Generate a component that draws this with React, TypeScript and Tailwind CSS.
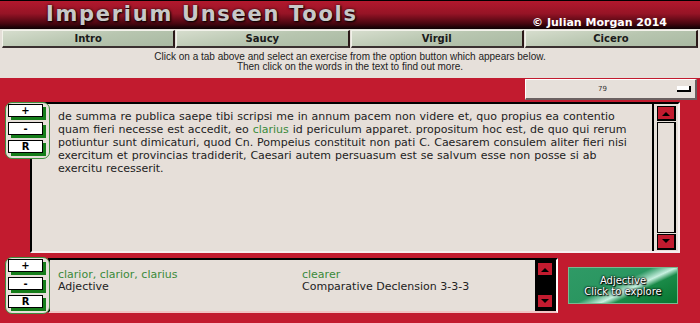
import React from "react";

function BtnGroup() {
  return (
    <div className="w-[45px] h-[57px] rounded-[7px] border-[1.5px] border-[#3e8e3e] bg-[#e6dfd9] flex flex-col pl-[2px] pt-[1px] gap-[5px]">
      {["+", "-", "R"].map((l) => (
        <div
          key={l}
          className="w-[35px] h-[13px] bg-white border border-black shadow-[3px_3px_0_#157d1a] text-[10px] font-bold leading-[11px] text-center text-black"
        >
          {l}
        </div>
      ))}
    </div>
  );
}

function Arrow({ up }: { up: boolean }) {
  return (
    <svg width="8" height="5" viewBox="0 0 8 5">
      {up ? <path d="M0 5 L4 1 L8 5 Z" fill="#000" /> : <path d="M0 0 L8 0 L4 4 Z" fill="#000" />}
    </svg>
  );
}

export default function App() {
  const tabs = ["Intro", "Saucy", "Virgil", "Cicero"];
  return (
    <div className="w-[700px] h-[323px] bg-[#c21b2f] flex flex-col overflow-hidden font-['DejaVu_Sans',Verdana,sans-serif]">
      <header className="h-[29px] shrink-0 flex border-t border-black bg-[linear-gradient(to_bottom,#b3182d_0%,#961426_45%,#4a0610_80%,#0c0002_100%)]">
        <h1 className="ml-[46px] mt-[1px] text-[21px] leading-[24px] font-bold tracking-[1.7px] text-[#c8c8c8] [text-shadow:1px_1px_2px_#000,0_0_3px_rgba(0,0,0,0.6)]">
          Imperium Unseen Tools
        </h1>
        <div className="ml-auto mr-[33px] mt-[15px] text-[11px] leading-[13px] font-bold text-white">
          © Julian Morgan 2014
        </div>
      </header>

      <nav className="h-[19px] shrink-0 bg-[#e4dfd8] flex gap-px px-[2px] pt-px">
        {tabs.map((t) => (
          <div
            key={t}
            className="flex-1 flex items-center justify-center text-[10px] font-bold text-[#1a1a1a] border-t border-l border-t-[#f2f2ea] border-l-[#f2f2ea] border-r-2 border-b-2 border-r-[#2a1818] border-b-[#3a3030] bg-[linear-gradient(170deg,#d6ddcd_0%,#b8c6b0_50%,#a9b9a2_100%)]"
          >
            {t}
          </div>
        ))}
      </nav>

      <div className="h-[30px] shrink-0 bg-[#e6e0da] pt-[4px] text-center text-[10px] leading-[10px] text-[#222] font-['Liberation_Sans',Arial,sans-serif]">
        Click on a tab above and select an exercise from the option button which appears below.
        <br />
        Then click on the words in the text to find out more.
      </div>

      <div className="h-[24px] shrink-0 flex justify-end pr-[3px] pt-px">
        <div className="w-[172px] h-[21px] bg-[#e6e0da] border-t border-l border-t-white border-l-white border-b-2 border-r-2 border-b-[#6a6060] border-r-[#6a6060] flex items-center">
          <div className="flex-1 text-center text-[7px] text-[#333] pl-[2px]">79</div>
          <div className="w-[14px] h-[6px] mr-[4px] bg-white border-b-2 border-r-2 border-black" />
        </div>
      </div>

      <div className="relative h-[151px] shrink-0 flex">
        <div className="w-[30px] shrink-0" />
        <div className="w-[650px] flex border-t-2 border-l-2 border-t-black border-l-black border-b-2 border-r-2 border-b-[#f6eeee] border-r-[#f6eeee] bg-[#e6dfd9]">
          <div className="flex-1 pl-[26px] pt-[6px] text-[11px] leading-[13px] text-[#222] whitespace-nowrap [word-spacing:0.4px]">
            de summa re publica saepe tibi scripsi me in annum pacem non videre et, quo propius ea contentio
            <br />
            quam fieri necesse est accedit, eo <span className="text-[#3a8a3a]">clarius</span> id periculum apparet. propositum hoc est, de quo qui rerum
            <br />
            potiuntur sunt dimicaturi, quod Cn. Pompeius constituit non pati C. Caesarem consulem aliter fieri nisi
            <br />
            exercitum et provincias tradiderit, Caesari autem persuasum est se salvum esse non posse si ab
            <br />
            exercitu recesserit.
          </div>
          <div className="w-[26px] shrink-0 border-l-2 border-black flex flex-col pl-[3px] pr-[2px] pt-[2px] pb-[1px]">
            <div className="h-[15px] bg-[#c21b2f] border border-black border-r-2 border-b-2 flex items-center justify-center">
              <Arrow up />
            </div>
            <div className="flex-1 my-px border border-black border-r-2 bg-[#e6dfd9]" />
            <div className="h-[16px] bg-[#c21b2f] border border-black border-r-2 border-b-2 flex items-center justify-center">
              <Arrow up={false} />
            </div>
          </div>
        </div>
        <div className="absolute left-[5px] top-0">
          <BtnGroup />
        </div>
      </div>

      <div className="relative mt-[5px] h-[55px] shrink-0 flex">
        <div className="w-[48px] shrink-0" />
        <div className="w-[510px] flex border-t-2 border-l-2 border-t-black border-l-black border-b-2 border-r-2 border-b-[#f0c4c4] border-r-white bg-[#e6dfd9]">
          <div className="flex-1 flex pl-[8px] pt-[9px] text-[11px] leading-[12px] text-[#222]">
            <div className="w-[244px]">
              <div className="text-[#3a8a3a]">clarior, clarior, clarius</div>
              <div>Adjective</div>
            </div>
            <div>
              <div className="text-[#3a8a3a]">clearer</div>
              <div>Comparative Declension 3-3-3</div>
            </div>
          </div>
          <div className="w-[21px] shrink-0 bg-black flex flex-col justify-between pl-[2px] pr-[2px] py-[2px]">
            <div className="h-[15px] bg-[#c21b2f] border border-black border-r-2 border-b-2 flex items-center justify-center">
              <Arrow up />
            </div>
            <div className="h-[15px] bg-[#c21b2f] border border-black border-r-2 border-b-2 flex items-center justify-center">
              <Arrow up={false} />
            </div>
          </div>
        </div>
        <div className="ml-[10px] mt-[9px] w-[110px] h-[37px] border border-[#7ab890] bg-[linear-gradient(155deg,#2f9a66_0%,#2a9660_45%,#c8f0e0_58%,#1a8a48_66%,#07752f_100%)] flex flex-col items-center justify-center text-[10px] leading-[11px] text-white [text-shadow:0_0_2px_#000,0_0_2px_#000,1px_1px_1px_#000]">
          <div>Adjective</div>
          <div>Click to explore</div>
        </div>
        <div className="absolute left-[5px] top-[-1px]">
          <BtnGroup />
        </div>
      </div>
    </div>
  );
}
